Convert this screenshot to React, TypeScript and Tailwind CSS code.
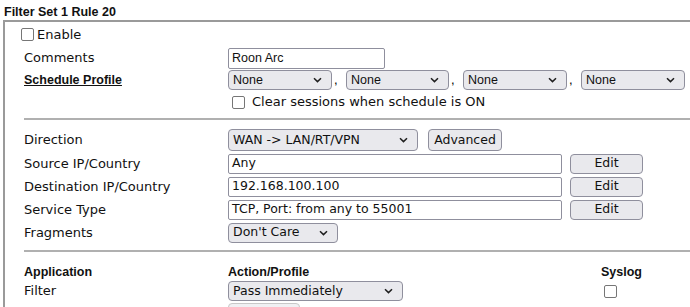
import type { ReactNode } from "react";

// Vigor-style router filter rule editor
const tahoma = "font-['DejaVu_Sans',sans-serif]";
const arial = "font-['Liberation_Sans',Arial,sans-serif]";

function Chevron() {
  return (
    <svg width="9" height="6" viewBox="0 0 9 6" className="shrink-0">
      <path d="M1 1.2 L4.5 4.6 L8 1.2" fill="none" stroke="#1f1f1f" strokeWidth="1.5" />
    </svg>
  );
}

function Select({ value, w, font = tahoma }: { value: string; w: string; font?: string }) {
  return (
    <div
      className={`flex h-[20px] ${w} items-center justify-between rounded-[4px] border border-[#8f8f9d] bg-[#e9e9ed] pl-[4px] pr-[9px] text-[12.5px] text-[#111] ${font}`}
    >
      <span className="leading-none">{value}</span>
      <Chevron />
    </div>
  );
}

function Input({ value, w }: { value: string; w: string }) {
  return (
    <div
      className={`flex h-[20px] ${w} items-center rounded-[2px] border border-[#8f8f9d] bg-white px-[3px] text-[12.5px] text-[#111] ${tahoma}`}
    >
      <span className="leading-none">{value}</span>
    </div>
  );
}

function Button({ label, w }: { label: string; w: string }) {
  return (
    <div
      className={`flex h-[20px] ${w} items-center justify-center rounded-[4px] border border-[#8f8f9d] bg-[#e9e9ed] text-[12.5px] text-[#111] ${tahoma}`}
    >
      <span className="leading-none">{label}</span>
    </div>
  );
}

function Check() {
  return <div className="h-[13px] w-[13px] shrink-0 rounded-[2px] border border-[#767676] bg-white" />;
}

function Row({ label, h, children }: { label: ReactNode; h: string; children?: ReactNode }) {
  return (
    <div className={`flex ${h} items-center`}>
      <div className={`w-[204px] shrink-0 text-[13px] text-[#111] ${tahoma}`}>{label}</div>
      <div className="flex items-center">{children}</div>
    </div>
  );
}

export default function App() {
  return (
    <div className="h-[307px] w-[690px] overflow-hidden bg-white">
      <div className={`h-[20px] pl-[4px] pt-[5px] text-[12.5px] font-bold leading-[15px] text-[#111] ${arial}`}>
        Filter Set 1 Rule 20
      </div>
      <div className="ml-[3px] border-l-2 border-t-2 border-[#9a9a9a] pt-[4px]">
        <div className={`flex h-[17px] items-center gap-[3px] pl-[16px] text-[13px] text-[#111] ${tahoma}`}>
          <Check />
          <span>Enable</span>
        </div>
        <div className="pl-[19px] pt-[4px]">
          <Row label="Comments" h="h-[22px]">
            <div className={`flex h-[21px] w-[157px] items-center rounded-[2px] border border-[#8f8f9d] bg-white px-[3px] text-[12.5px] text-[#111] ${arial}`}>
              Roon Arc
            </div>
          </Row>
          <Row
            label={<span className={`font-bold underline ${arial} text-[12.5px]`}>Schedule Profile</span>}
            h="h-[22px]"
          >
            <div className={`flex items-center text-[13px] ${arial}`}>
              <Select value="None" w="w-[104px]" font={arial} />
              <span className="w-[14px] pl-[2px]">,</span>
              <Select value="None" w="w-[103px]" font={arial} />
              <span className="w-[14px] pl-[2px]">,</span>
              <Select value="None" w="w-[104px]" font={arial} />
              <span className="w-[14px] pl-[2px]">,</span>
              <Select value="None" w="w-[104px]" font={arial} />
            </div>
          </Row>
          <Row label="" h="h-[22px]">
            <div className={`flex items-center gap-[7px] pl-[4px] text-[13px] text-[#111] ${tahoma}`}>
              <Check />
              <span>Clear sessions when schedule is ON</span>
            </div>
          </Row>
          <div className="mt-[5px] border-t-2 border-[#b0b0b0]" />
          <div className="pt-[8px]">
            <Row label="Direction" h="h-[24px]">
              <div className="flex items-center gap-[10px]">
                <div className="h-[22px]">
                  <Select value="WAN -> LAN/RT/VPN" w="w-[190px] !h-[22px]" />
                </div>
                <div className="flex h-[22px] w-[74px] items-center justify-center rounded-[4px] border border-[#8f8f9d] bg-[#e9e9ed] text-[12.5px] text-[#111] font-['DejaVu_Sans',sans-serif]">
                  Advanced
                </div>
              </div>
            </Row>
            <Row label="Source IP/Country" h="h-[23px]">
              <Input value="Any" w="w-[334px]" />
              <div className="w-[8px]" />
              <Button label="Edit" w="w-[73px]" />
            </Row>
            <Row label="Destination IP/Country" h="h-[23px]">
              <Input value="192.168.100.100" w="w-[334px]" />
              <div className="w-[8px]" />
              <Button label="Edit" w="w-[73px]" />
            </Row>
            <Row label="Service Type" h="h-[23px]">
              <Input value="TCP, Port: from any to 55001" w="w-[334px]" />
              <div className="w-[8px]" />
              <Button label="Edit" w="w-[73px]" />
            </Row>
            <Row label="Fragments" h="h-[23px]">
              <Select value="Don't Care" w="w-[110px]" />
            </Row>
          </div>
          <div className="mt-[6px] border-t-2 border-[#b0b0b0]" />
          <div className="pt-[12px]">
            <div className={`flex h-[16px] items-center text-[12.5px] font-bold text-[#111] ${arial}`}>
              <div className="w-[204px]">Application</div>
              <div className="w-[373px]">Action/Profile</div>
              <div>Syslog</div>
            </div>
            <Row label="Filter" h="h-[22px]">
              <Select value="Pass Immediately" w="w-[175px]" />
              <div className="w-[201px]" />
              <Check />
            </Row>
            <Row label="" h="h-[22px]">
              <div className="h-[20px] w-[72px] rounded-[4px] border border-[#c8c8c8] bg-[#f0f0f3]" />
            </Row>
          </div>
        </div>
      </div>
    </div>
  );
}
